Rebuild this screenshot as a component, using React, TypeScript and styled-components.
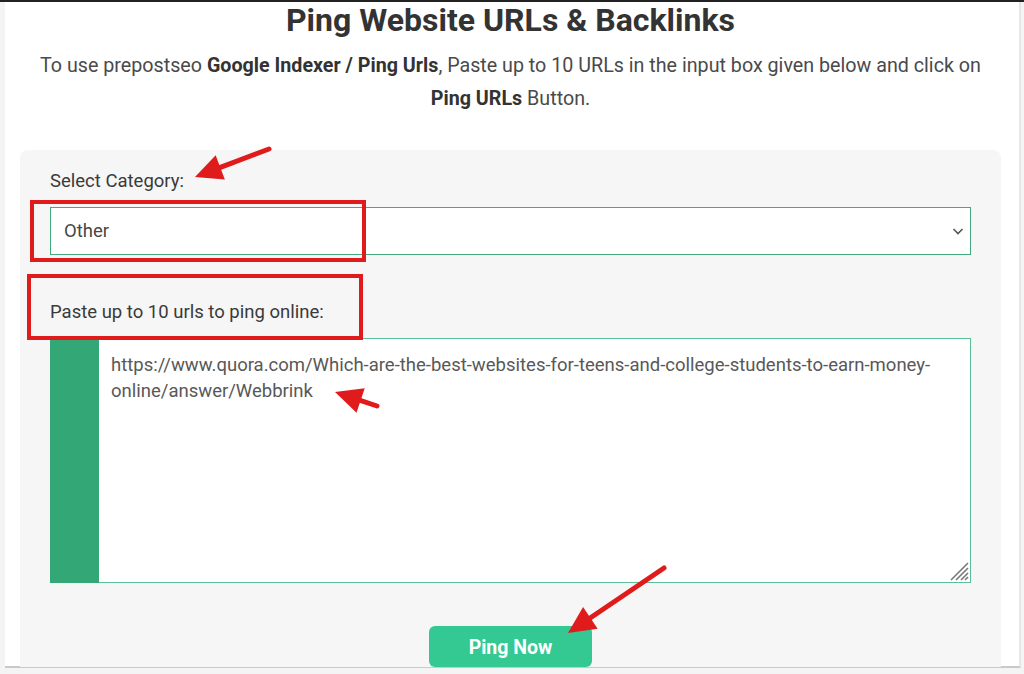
import React from "react";
import styled, { createGlobalStyle } from "styled-components";

const Global = createGlobalStyle`
  html, body { margin: 0; padding: 0; background: #ffffff; }
  body { font-family: Roboto, "Liberation Sans", Arial, sans-serif; }
  * { box-sizing: border-box; }
`;

const Screen = styled.div`
  position: relative;
  width: 1024px;
  height: 674px;
  overflow: hidden;
  background: #f4f4f4;
  border-top: 2px solid #222;
`;

const Frame = styled.div`
  margin-left: 5px;
  width: 1016px;
  height: 666px;
  background: #fff;
  border-right: 2px solid #e6e6e6;
  border-bottom: 2px solid #c9c9c9;
  display: flex;
  flex-direction: column;
  align-items: flex-start;
`;

const Content = styled.div`
  width: 981px;
  margin-left: 15px;
  display: flex;
  flex-direction: column;
  align-items: center;
`;

const Title = styled.h1`
  margin: 0;
  font-size: 32px;
  line-height: 36px;
  font-weight: 700;
  color: #333;
`;

const Intro = styled.p`
  margin: 11px 0 0;
  width: 960px;
  text-align: center;
  font-size: 19.7px;
  line-height: 33px;
  color: #4a4a4a;
  b { font-weight: 700; color: #333; }
`;

const Panel = styled.div`
  margin-top: 35px;
  width: 981px;
  background: #f6f6f6;
  border-radius: 8px 8px 0 0;
  padding: 20px 30px 0;
  display: flex;
  flex-direction: column;
  flex: 1;
`;

const Label = styled.label<{ $top?: number }>`
  display: block;
  margin-top: ${(p) => p.$top ?? 0}px;
  font-size: 18.5px;
  line-height: 22px;
  color: #3a3a3a;
`;

const SelectWrap = styled.div`
  position: relative;
  margin-top: 15px;
  height: 48px;
`;

const Select = styled.select`
  appearance: none;
  width: 100%;
  height: 48px;
  border: 1px solid #44a97e;
  background: #fff;
  padding: 0 40px 0 13px;
  font-family: Roboto, "Liberation Sans", Arial, sans-serif;
  font-size: 18.5px;
  color: #474747;
  border-radius: 0;
  outline: none;
`;

const Chevron = styled.svg`
  position: absolute;
  right: 6px;
  top: 17px;
  pointer-events: none;
`;

const Editor = styled.div`
  position: relative;
  margin-top: 15px;
  height: 245px;
  display: flex;
  border: 1px solid #5bbf99;
  background: #fff;
`;

const Gutter = styled.div`
  width: 49px;
  background: #33a876;
  margin: -1px 0 -1px -1px;
`;

const Area = styled.textarea`
  flex: 1;
  border: none;
  outline: none;
  resize: none;
  padding: 13px 12px;
  font-family: Roboto, "Liberation Sans", Arial, sans-serif;
  font-size: 18.5px;
  line-height: 26px;
  color: #585858;
  background: #fff;
`;

const Grip = styled.svg`
  position: absolute;
  right: 1px;
  bottom: 1px;
  pointer-events: none;
`;

const ButtonRow = styled.div`
  display: flex;
  justify-content: center;
  margin-top: 43px;
`;

const PingButton = styled.button`
  width: 163px;
  height: 41px;
  border: none;
  border-radius: 6px;
  background: #34c893;
  color: #fff;
  font-family: Roboto, "Liberation Sans", Arial, sans-serif;
  font-size: 19.5px;
  font-weight: 700;
  padding-top: 3px;
  cursor: pointer;
`;

const Annotations = styled.svg`
  position: absolute;
  left: 0;
  top: 0;
  pointer-events: none;
`;

const RED = "#e01b1b";

function Arrow({ x1, y1, x2, y2 }: { x1: number; y1: number; x2: number; y2: number }) {
  const dx = x2 - x1;
  const dy = y2 - y1;
  const len = Math.hypot(dx, dy);
  const ux = dx / len;
  const uy = dy / len;
  const headLen = 27;
  const half = 13;
  const bx = x2 - ux * headLen;
  const by = y2 - uy * headLen;
  const px = -uy;
  const py = ux;
  const pts = `${x2},${y2} ${bx + px * half},${by + py * half} ${bx - px * half},${by - py * half}`;
  return (
    <g>
      <line x1={x1} y1={y1} x2={bx + ux * 2} y2={by + uy * 2} stroke={RED} strokeWidth={5} strokeLinecap="round" />
      <polygon points={pts} fill={RED} />
    </g>
  );
}

export default function App() {
  return (
    <>
      <Global />
      <Screen>
        <Frame>
          <Content>
            <Title>Ping Website URLs &amp; Backlinks</Title>
            <Intro>
              To use prepostseo <b>Google Indexer / Ping Urls</b>, Paste up to 10 URLs in the input box given below and click on{" "}
              <b>Ping URLs</b> Button.
            </Intro>
            <Panel>
              <Label>Select Category:</Label>
              <SelectWrap>
                <Select defaultValue="Other">
                  <option>Other</option>
                </Select>
                <Chevron width="14" height="14" viewBox="0 0 14 14">
                  <path d="M2.5 5 L7 9.5 L11.5 5" fill="none" stroke="#555" strokeWidth="1.6" />
                </Chevron>
              </SelectWrap>
              <Label $top={46}>Paste up to 10 urls to ping online:</Label>
              <Editor>
                <Gutter />
                <Area
                  spellCheck={false}
                  defaultValue="https://www.quora.com/Which-are-the-best-websites-for-teens-and-college-students-to-earn-money-online/answer/Webbrink"
                />
                <Grip width="20" height="20" viewBox="0 0 20 20">
                  <g stroke="#777" strokeWidth="1.6">
                    <line x1="2" y1="19" x2="19" y2="2" />
                    <line x1="7" y1="19" x2="19" y2="7" />
                    <line x1="12" y1="19" x2="19" y2="12" />
                    <line x1="16" y1="19" x2="19" y2="16" />
                  </g>
                </Grip>
              </Editor>
              <ButtonRow>
                <PingButton>Ping Now</PingButton>
              </ButtonRow>
            </Panel>
          </Content>
        </Frame>
        <Annotations width="1024" height="674" viewBox="0 0 1024 674">
          <rect x="32" y="200" width="332" height="58" fill="none" stroke={RED} strokeWidth="4" />
          <rect x="29" y="274" width="332" height="62" fill="none" stroke={RED} strokeWidth="4" />
          <Arrow x1={269} y1={147} x2={195} y2={175} />
          <Arrow x1={377} y1={404} x2={335} y2={390} />
          <Arrow x1={664} y1={566} x2={568} y2={631} />
        </Annotations>
      </Screen>
    </>
  );
}
